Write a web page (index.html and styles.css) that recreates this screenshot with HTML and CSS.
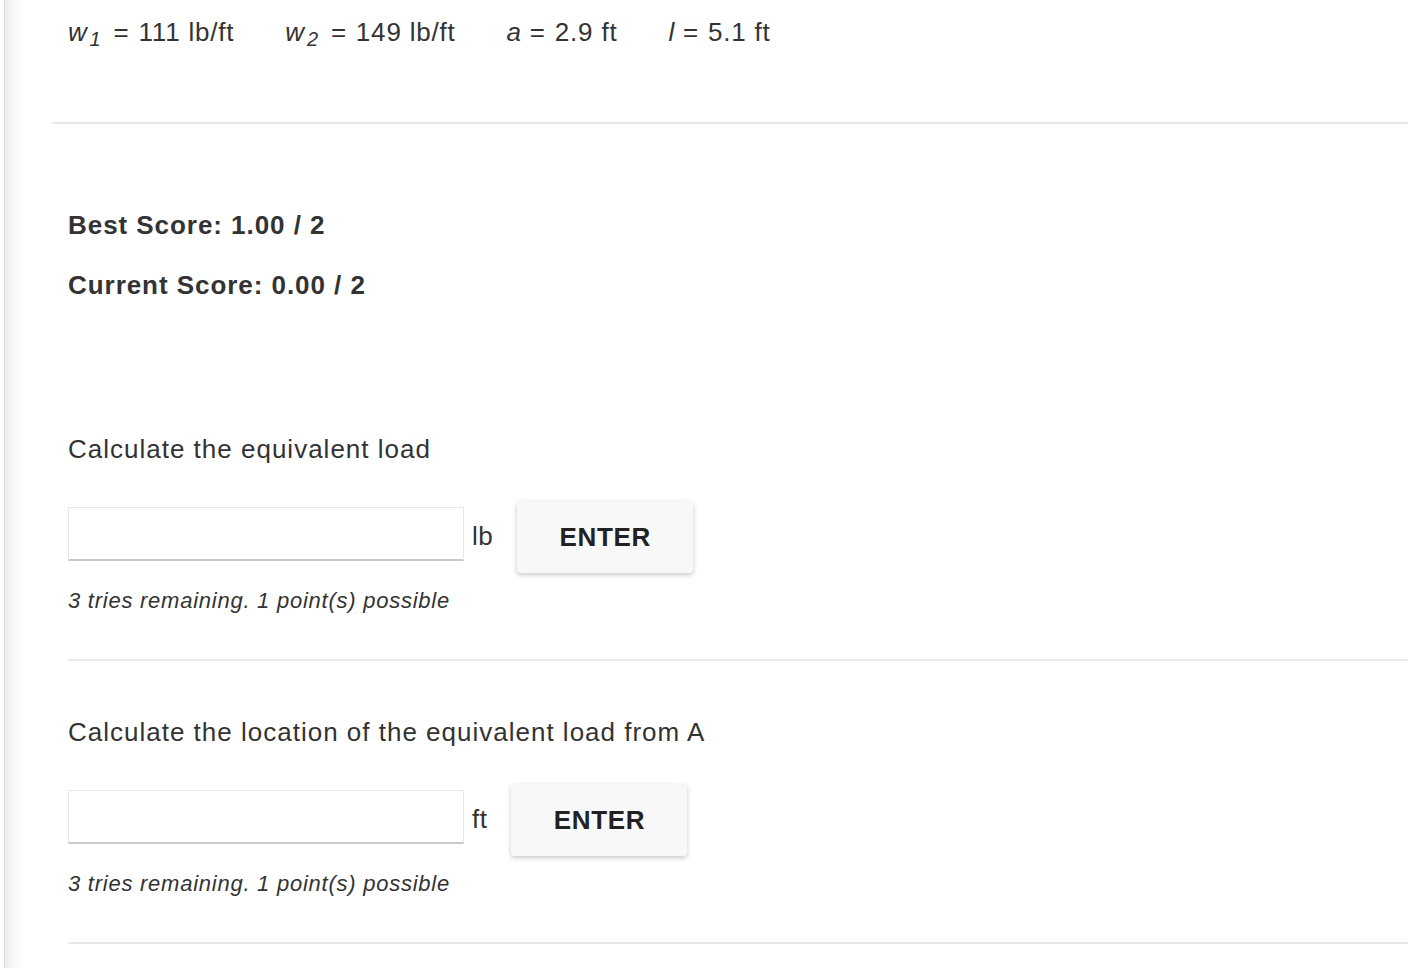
FILE: index.html
```html
<!DOCTYPE html>
<html>
<head>
<meta charset="utf-8">
<link rel="stylesheet" href="styles.css">
</head>
<body>
<div class="page">
  <div class="params">
    <span class="param wide"><i>w</i><sub>1</sub><span class="eq">=</span>111 lb/ft</span>
    <span class="param wide"><i>w</i><sub>2</sub><span class="eq">=</span>149 lb/ft</span>
    <span class="param"><i>a</i><span class="eq">=</span>2.9 ft</span>
    <span class="param"><i>l</i><span class="eq">=</span>5.1 ft</span>
  </div>
  <hr class="rule rule-wide">
  <div class="content">
    <div class="scores">
      <p class="score">Best Score: 1.00 / 2</p>
      <p class="score">Current Score: 0.00 / 2</p>
    </div>
    <div class="question first">
      <p class="prompt">Calculate the equivalent load</p>
      <div class="answer-row">
        <input class="answer" type="text">
        <span class="unit">lb</span>
        <button class="enter">ENTER</button>
      </div>
      <p class="tries">3 tries remaining. 1 point(s) possible</p>
    </div>
    <hr class="rule">
    <div class="question">
      <p class="prompt">Calculate the location of the equivalent load from A</p>
      <div class="answer-row">
        <input class="answer" type="text">
        <span class="unit">ft</span>
        <button class="enter">ENTER</button>
      </div>
      <p class="tries">3 tries remaining. 1 point(s) possible</p>
    </div>
    <hr class="rule">
  </div>
</div>
</body>
</html>
```

FILE: styles.css
```css
html, body {
  margin: 0;
  padding: 0;
  background: #fff;
}
body {
  font-family: "Liberation Sans", Arial, Helvetica, sans-serif;
  color: #333;
  height: 968px;
  overflow: hidden;
}
.page {
  margin-left: 4px;
  border-left: 1px solid #d8d8d8;
  background: linear-gradient(to right, #ececec 0, #fafafa 10px, #fff 20px);
  min-height: 968px;
  padding-left: 47px;
}
.params {
  padding-top: 14px;
  padding-left: 16px;
  font-size: 26px;
  line-height: 36px;
  height: 36px;
  display: flex;
  gap: 51px;
  white-space: nowrap;
  letter-spacing: 0.8px;
}
.param i {
  font-style: italic;
}
.param sub {
  font-style: italic;
  font-size: 20px;
  line-height: 0;
  vertical-align: -5px;
  margin: 0 4px 0 2px;
}
.eq {
  margin: 0 9px 0 8px;
}
.rule {
  border: 0;
  height: 2px;
  background: #e8e8e8;
  margin: 0;
}
.rule-wide {
  margin-top: 72px;
}
.content {
  padding-left: 16px;
}
.scores {
  padding-top: 83px;
}
.score {
  margin: 0 0 24px 0;
  font-size: 26px;
  line-height: 36px;
  font-weight: bold;
  letter-spacing: 0.95px;
  color: #333;
}
.question {
  padding-top: 53px;
  padding-bottom: 43px;
}
.question.first {
  padding-top: 104px;
}
.prompt {
  margin: 0;
  font-size: 26px;
  line-height: 36px;
  letter-spacing: 1px;
}
.answer-row {
  margin-top: 34px;
  display: flex;
  align-items: flex-start;
  height: 72px;
}
.answer {
  margin: 6px 0 0 0;
  box-sizing: border-box;
  width: 396px;
  height: 54px;
  border: 1px solid #e6e6e6;
  border-bottom: 2px solid #cacaca;
  background: #fff;
  outline: none;
  padding: 0 10px;
  font-size: 22px;
}
.unit {
  margin-left: 8px;
  font-size: 26px;
  line-height: 70px;
  letter-spacing: 0.5px;
  color: #333;
}
.enter {
  margin-left: 24px;
  width: 176px;
  height: 72px;
  border: 0;
  border-radius: 4px;
  background: #f8f8f8;
  box-shadow: 0 2px 5px rgba(0, 0, 0, 0.22);
  font-family: "Liberation Sans", Arial, sans-serif;
  font-size: 26px;
  font-weight: bold;
  color: #222;
  letter-spacing: 0.7px;
  padding: 0;
}
.tries {
  margin: 13px 0 0 0;
  font-size: 22px;
  line-height: 30px;
  font-style: italic;
  letter-spacing: 0.75px;
  color: #333;
}
```
